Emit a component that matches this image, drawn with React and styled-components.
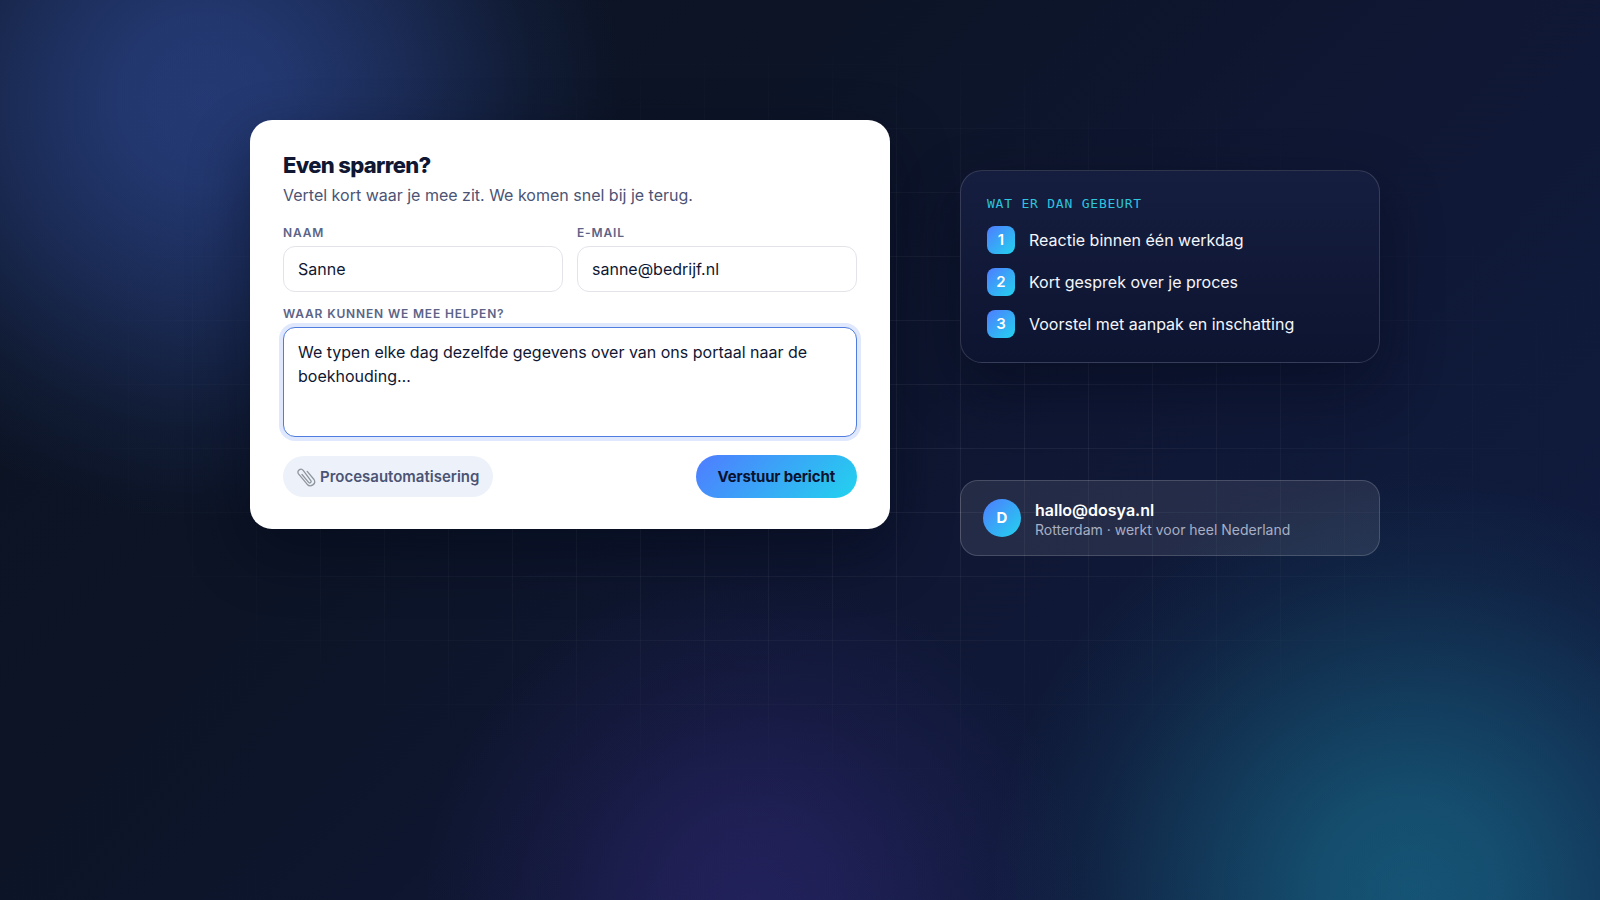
import React, { useState } from 'react'
import styled, { createGlobalStyle } from 'styled-components';

const GlobalStyle = createGlobalStyle`
    *,
    *::before,
    *::after{
        box-sizing: border-box;
    }

    body{
        margin: 0;
        background: #0b1220;
        color: #fff;
        font-family: Inter, 'Liberation Sans', sans-serif;
        font-size: 16px;
        line-height: 24px;
    }

    h2, p, ol{
        margin: 0;
        padding: 0;
    }
`;

const Page = styled.div`
    position: relative;
    min-height: 100vh;
    overflow: hidden;
    background:
        radial-gradient(circle 420px at 204px 100px, rgba(79, 124, 255, .36), rgba(79, 124, 255, .34) 20%, rgba(79, 124, 255, .24) 45%, rgba(79, 124, 255, .07) 78%, transparent),
        radial-gradient(circle 420px at calc(100% - 190px) calc(100% - 10px), rgba(34, 211, 238, .3), rgba(34, 211, 238, .27) 22%, rgba(34, 211, 238, .18) 45%, rgba(34, 211, 238, .05) 78%, transparent),
        radial-gradient(circle 330px at 47% 100%, rgba(109, 70, 237, .2), rgba(109, 70, 237, .17) 25%, rgba(109, 70, 237, .08) 60%, transparent),
        linear-gradient(135deg, #0b1322 0%, #0c1426 34%, #0f1734 60%, #101d42 100%);

    /* fading grid lines */
    &::before{
        content: '';
        position: absolute;
        inset: 0;
        background-image:
            linear-gradient(rgba(255, 255, 255, .06) 1px, transparent 1px),
            linear-gradient(90deg, rgba(255, 255, 255, .06) 1px, transparent 1px);
        background-size: 64px 64px;
        mask-image: radial-gradient(ellipse 50% 43% at 51% 46%, #000 30%, transparent 100%);
    }
`;

const Layout = styled.main`
    position: relative;
    display: grid;
    grid-template-columns: minmax(0, 64fr) minmax(0, 42fr);
    column-gap: 70px;
    align-items: start;
    padding: 120px 220px 64px 250px;
`;

const Side = styled.div`
    display: flex;
    flex-direction: column;
    gap: 117px;
    padding-top: 50px;
`;

const FormCard = styled.form`
    display: flex;
    flex-direction: column;
    padding: 31px 33px;
    border-radius: 22px;
    background: #fff;
    color: #0f1733;
    box-shadow: 0 24px 60px rgba(2, 6, 23, .45);
`;

const Title = styled.h2`
    font-size: 22px;
    font-weight: 800;
    line-height: 28px;
    letter-spacing: -.03em;
`;

const Intro = styled.p`
    margin-top: 4px;
    color: #4b5475;
`;

const FieldRow = styled.div`
    display: grid;
    grid-template-columns: 1fr 1fr;
    gap: 14px;
    margin: 17px 0 13px;
`;

const Field = styled.div`
    display: flex;
    flex-direction: column;
    gap: 4px;
`;

const Label = styled.label`
    color: #5b6487;
    font-size: 12px;
    font-weight: 600;
    line-height: 18px;
    letter-spacing: .07em;
    text-transform: uppercase;
`;

const Input = styled.input`
    width: 100%;
    height: 46px;
    padding: 0 14px;
    border: 1px solid #e2e4ea;
    border-radius: 12px;
    outline: none;
    background: #fff;
    color: #0f1733;
    font: inherit;
`;

const TextArea = styled.textarea`
    display: block;
    width: 100%;
    height: 110px;
    padding: 12px 14px;
    border: 1px solid #4f7cdf;
    border-radius: 12px;
    outline: none;
    background: #fff;
    box-shadow: 0 0 0 4px #e0e8fd;
    color: #0f1733;
    font: inherit;
    resize: none;
`;

const Actions = styled.div`
    display: flex;
    align-items: center;
    justify-content: space-between;
    margin-top: 18px;
`;

const Chip = styled.button`
    display: flex;
    align-items: center;
    gap: 4px;
    height: 41px;
    padding: 0 14px;
    border: none;
    border-radius: 999px;
    background: #edf2fa;
    color: #4b5475;
    font: 600 15px/24px Inter, sans-serif;
    cursor: pointer;
`;

const Submit = styled.button`
    height: 43px;
    padding: 0 22px;
    border: none;
    border-radius: 999px;
    background: linear-gradient(135deg, #4f7cff, #22d3ee);
    color: #0b1230;
    font: 700 15px/24px Inter, sans-serif;
    letter-spacing: -.01em;
    cursor: pointer;
`;

const StepsCard = styled.section`
    padding: 22px 26px 24px;
    border: 1px solid rgba(255, 255, 255, .14);
    border-radius: 22px;
    background: linear-gradient(180deg, #161e40, #0d1430);
    box-shadow: 0 24px 60px rgba(2, 6, 23, .45);
`;

const StepsTitle = styled.h2`
    color: #2cc4de;
    font-family: 'DejaVu Sans Mono', monospace;
    font-size: 13px;
    font-weight: 400;
    line-height: 22px;
    letter-spacing: .06em;
    text-transform: uppercase;
`;

const Steps = styled.ol`
    display: flex;
    flex-direction: column;
    gap: 14px;
    margin-top: 11px;
    list-style: none;
`;

const Step = styled.li`
    display: flex;
    align-items: center;
    gap: 14px;
    color: #f4f6fc;
`;

const Badge = styled.span`
    display: grid;
    flex: none;
    place-items: center;
    width: ${props => props.$size}px;
    height: ${props => props.$size}px;
    border-radius: ${props => props.$round ? '50%' : '8px'};
    background: linear-gradient(135deg, #4f7cff, #22d3ee);
    color: #fff;
    font-size: 15px;
    font-weight: ${props => props.$round ? 700 : 600};
`;

const ContactCard = styled.address`
    display: flex;
    align-items: center;
    gap: 14px;
    padding: 16px 22px;
    border: 1px solid rgba(255, 255, 255, .16);
    border-radius: 18px;
    background: rgba(255, 255, 255, .09);
    font-style: normal;
`;

const ContactText = styled.div`
    display: flex;
    flex-direction: column;
    padding-top: 4px;
    line-height: 19px;
`;

const Mail = styled.a`
    color: #fff;
    font-weight: 600;
    text-decoration: none;
`;

const Place = styled.span`
    color: #a8afc4;
    font-size: 14px;
`;

const steps = [
    'Reactie binnen één werkdag',
    'Kort gesprek over je proces',
    'Voorstel met aanpak en inschatting',
];

function Paperclip() {
    return (
        <svg width="19" height="20" viewBox="0 0 19 20" fill="none" stroke="#8f959d" strokeWidth="1.3" strokeLinecap="round" aria-hidden="true">
            <path d="M5 7.5 11.6 15.4c1.2 1.3 3.3-.2 2.2-1.8L6.2 3.4C4 .6-.7 3.6 1.5 6.8l8.6 10.4c3.4 3.8 9.6-.4 6.9-4.7L10.2 4.4" />
        </svg>
    )
}

function App() {

    const [name, setName] = useState('Sanne');
    const [email, setEmail] = useState('sanne@bedrijf.nl');
    const [message, setMessage] = useState('We typen elke dag dezelfde gegevens over van ons portaal naar de boekhouding…');

    const submitHandler = (e) => {
        e.preventDefault();
    }

    return (
        <Page>
            <GlobalStyle />
            <Layout>
                <FormCard onSubmit={submitHandler}>
                    <Title>Even sparren?</Title>
                    <Intro>Vertel kort waar je mee zit. We komen snel bij je terug.</Intro>

                    <FieldRow>
                        <Field>
                            <Label htmlFor="name">Naam</Label>
                            <Input id="name" value={name} onChange={(e) => setName(e.target.value)} />
                        </Field>
                        <Field>
                            <Label htmlFor="email">E-mail</Label>
                            <Input id="email" type="email" value={email} onChange={(e) => setEmail(e.target.value)} />
                        </Field>
                    </FieldRow>

                    <Field>
                        <Label htmlFor="message">Waar kunnen we mee helpen?</Label>
                        <TextArea id="message" value={message} onChange={(e) => setMessage(e.target.value)} />
                    </Field>

                    <Actions>
                        <Chip type="button"><Paperclip />Procesautomatisering</Chip>
                        <Submit type="submit">Verstuur bericht</Submit>
                    </Actions>
                </FormCard>

                <Side>
                    <StepsCard>
                        <StepsTitle>Wat er dan gebeurt</StepsTitle>
                        <Steps>
                            {steps.map((step, index) =>
                                <Step key={step}>
                                    <Badge $size={28}>{index + 1}</Badge>
                                    {step}
                                </Step>
                            )}
                        </Steps>
                    </StepsCard>

                    <ContactCard>
                        <Badge $size={38} $round>D</Badge>
                        <ContactText>
                            <Mail href="mailto:hallo@dosya.nl">hallo@dosya.nl</Mail>
                            <Place>Rotterdam · werkt voor heel Nederland</Place>
                        </ContactText>
                    </ContactCard>
                </Side>
            </Layout>
        </Page>
    )
}

export default App
